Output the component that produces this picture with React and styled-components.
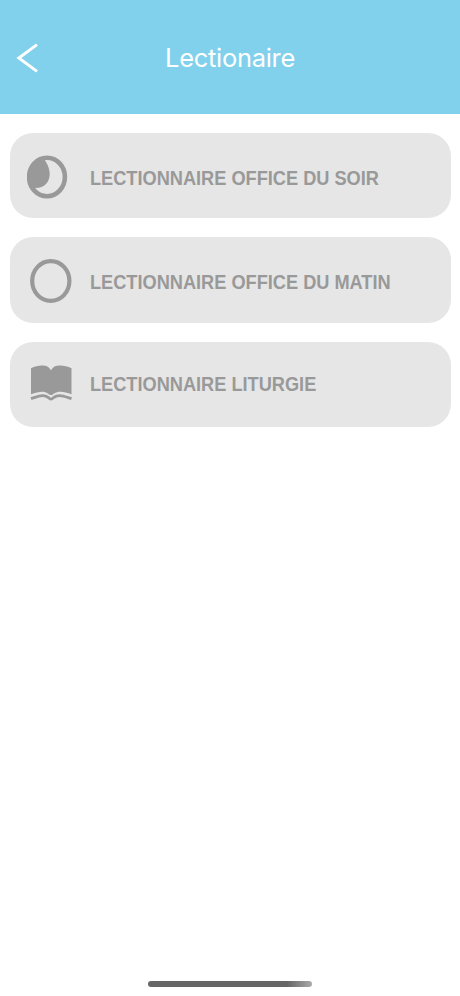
import React from "react";
import styled, { createGlobalStyle } from "styled-components";

const App = () => {
  return (
    <>
      <GlobalStyle />
      <Screen>
        <Header>
          <BackButton aria-label="Retour">
            <BackIcon />
          </BackButton>
          <Title>Lectionaire</Title>
        </Header>
        <List>
          {items.map(({ label, Icon, indent, iconLift, drop }) => (
            <Card key={label}>
              <IconSlot $indent={indent} $lift={iconLift}>
                <Icon />
              </IconSlot>
              <Label $drop={drop}>{label}</Label>
            </Card>
          ))}
        </List>
        <HomeIndicator />
      </Screen>
    </>
  );
};

const BackIcon = () => (
  <svg width="24" height="32" viewBox="0 0 24 32" fill="none">
    <path d="M22 2.6 L3.8 16 L22 29.4" stroke="#fff" strokeWidth="2.9" />
  </svg>
);

const MoonIcon = () => (
  <svg width="41" height="44" viewBox="0 0 41 44" fill="#999">
    <ellipse
      cx="20"
      cy="22"
      rx="17.9"
      ry="19.2"
      fill="none"
      stroke="#999"
      strokeWidth="4.6"
    />
    <path d="M17 4 C20 8 22.7 13 22.7 19 C22.7 27 17.5 33.2 8 33 L6 34.5 C1 28 0 16 4.5 10 C7.5 5.5 12 3 17 4 Z" />
  </svg>
);

const CircleIcon = () => (
  <svg width="42" height="44" viewBox="0 0 42 44" fill="none">
    <ellipse
      cx="20.8"
      cy="22"
      rx="18.6"
      ry="19.9"
      stroke="#999"
      strokeWidth="4.2"
    />
  </svg>
);

const BookIcon = () => (
  <svg width="42" height="38" viewBox="0 0 42 38" fill="#999">
    <path d="M1 4.2 C8 1 18 -0.3 21 6.5 C24 -0.3 34 1 41.5 4.2 V30.3 C35 28 29 26.2 24 29.5 Q21 32.6 18 29.5 C13.5 26.2 8 28 1 30.3 Z" />
    <path
      d="M1 34.6 C8 32 14 30 18.5 33.6 Q21 36.4 23.5 33.6 C28 30 34 32 41.5 34.6"
      fill="none"
      stroke="#999"
      strokeWidth="2.8"
    />
  </svg>
);

const items = [
  {
    label: "LECTIONNAIRE OFFICE DU SOIR",
    Icon: MoonIcon,
    indent: 17,
    iconLift: 0,
    drop: 4,
  },
  {
    label: "LECTIONNAIRE OFFICE DU MATIN",
    Icon: CircleIcon,
    indent: 20,
    iconLift: 0,
    drop: 4,
  },
  {
    label: "LECTIONNAIRE LITURGIE",
    Icon: BookIcon,
    indent: 20,
    iconLift: 4,
    drop: 0,
  },
];

const GlobalStyle = createGlobalStyle`
  * {
    box-sizing: border-box;
  }
  body {
    margin: 0;
    background: #fff;
    font-family: "Liberation Sans", sans-serif;
  }
`;

const Screen = styled.div`
  display: flex;
  flex-direction: column;
  height: 996px;
  width: 460px;
  overflow: hidden;
`;

const Header = styled.header`
  display: grid;
  grid-template-columns: 60px 1fr 60px;
  align-items: center;
  height: 114.4px;
  padding-top: 2px;
  background: #81d1ed;
`;

const BackButton = styled.button`
  display: flex;
  padding: 0 0 0 15px;
  border: none;
  background: none;
`;

const Title = styled.h1`
  margin: 0;
  font-family: Inter, sans-serif;
  font-size: 25.5px;
  font-weight: 400;
  letter-spacing: -0.3px;
  line-height: 32px;
  text-align: center;
  color: #fff;
`;

const List = styled.main`
  display: flex;
  flex-direction: column;
  flex: 1;
  gap: 19px;
  padding: 18.5px 9.5px 0;
`;

const Card = styled.section`
  display: flex;
  align-items: center;
  height: 85.4px;
  padding-top: 2px;
  border-radius: 23px;
  background: #e6e6e6;
`;

const IconSlot = styled.div`
  display: flex;
  width: 80.3px;
  padding-left: ${({ $indent }) => $indent}px;
  padding-bottom: ${({ $lift }) => $lift}px;
`;

const Label = styled.span`
  padding-top: ${({ $drop }) => $drop}px;
  font-size: 19.3px;
  font-weight: 700;
  line-height: 24px;
  white-space: nowrap;
  color: #999;
  transform: scaleX(0.943);
  transform-origin: left;
`;

const HomeIndicator = styled.div`
  flex-shrink: 0;
  width: 164px;
  height: 6px;
  margin: 0 auto 9px 148px;
  border-radius: 3px;
  background: linear-gradient(90deg, #666 85%, #aaa 100%);
`;

export default App;
